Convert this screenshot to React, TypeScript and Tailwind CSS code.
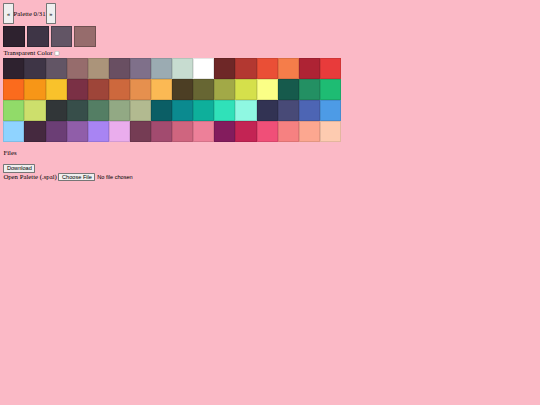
import React from "react";

const palette = [
  "#2e222f", "#3e3546", "#625565", "#966c6c", "#ab947a", "#694f62", "#7f708a", "#9babb2",
  "#c7dcd0", "#ffffff", "#6e2727", "#b33831", "#ea4f36", "#f57d4a", "#ae2334", "#e83b3b",
  "#fb6b1d", "#f79617", "#f9c22b", "#7a3045", "#9e4539", "#cd683d", "#e6904e", "#fbb954",
  "#4c3e24", "#676633", "#a2a947", "#d5e04b", "#fbff86", "#165a4c", "#239063", "#1ebc73",
  "#91db69", "#cddf6c", "#313638", "#374e4a", "#547e64", "#92a984", "#b2ba90", "#0b5e65",
  "#0b8a8f", "#0eaf9b", "#30e1b9", "#8ff8e2", "#323353", "#484a77", "#4d65b4", "#4d9be6",
  "#8fd3ff", "#45293f", "#6b3e75", "#905ea9", "#a884f3", "#eaaded", "#753c54", "#a24b6f",
  "#cf657f", "#ed8099", "#831c5d", "#c32454", "#f04f78", "#f68181", "#fca790", "#fdcbb0",
];

const selected = palette.slice(0, 4);

const btn =
  "bg-[#efefef] border border-solid border-[#767676] rounded-[2px] px-1.5 font-['Liberation_Sans',Arial,sans-serif] text-[13.333px] leading-normal text-black";

export default function App() {
  return (
    <div className="min-h-screen bg-[#fbb9c6]">
      {/* page drawn at 1280 wide, scaled to the 540 window */}
      <div className="[zoom:0.421875] p-2 font-['Liberation_Serif','Times_New_Roman',serif] text-base text-black">
        <div className="flex h-[50px] items-center">
          <button className={`${btn} h-full`}>«</button>
          <span>Palette 0/31</span>
          <button className={`${btn} h-full`}>»</button>
        </div>

        <div className="mt-1 flex gap-[5px]">
          {selected.map((c) => (
            <div
              key={c}
              className="h-[50px] w-[51px] border border-black/25"
              style={{ backgroundColor: c }}
            />
          ))}
        </div>

        <label className="mt-1 flex h-[21px] items-center">
          Transparent Color
          <input type="checkbox" className="ml-1" />
        </label>

        <div className="grid w-[800px] grid-cols-[repeat(16,50px)]">
          {palette.map((c) => (
            <div
              key={c}
              className="h-[50px] border border-black/10"
              style={{ backgroundColor: c }}
            />
          ))}
        </div>

        <p className="mt-4 mb-[18px] leading-[18px]">Files</p>
        <div className="flex">
          <button className={`${btn} flex h-[20px] items-center`}>Download</button>
        </div>
        <div className="flex h-[20px] items-center">
          <span>Open Palette (.spal)</span>
          <input
            type="file"
            accept=".spal"
            className="ml-1 h-[20px] font-['Liberation_Sans',Arial,sans-serif] text-[13.333px] leading-[18px] file:mr-1 file:h-[20px] file:rounded-[2px] file:border file:border-solid file:border-[#767676] file:bg-[#efefef] file:px-1.5 file:py-0 file:text-black"
          />
        </div>
      </div>
    </div>
  );
}
